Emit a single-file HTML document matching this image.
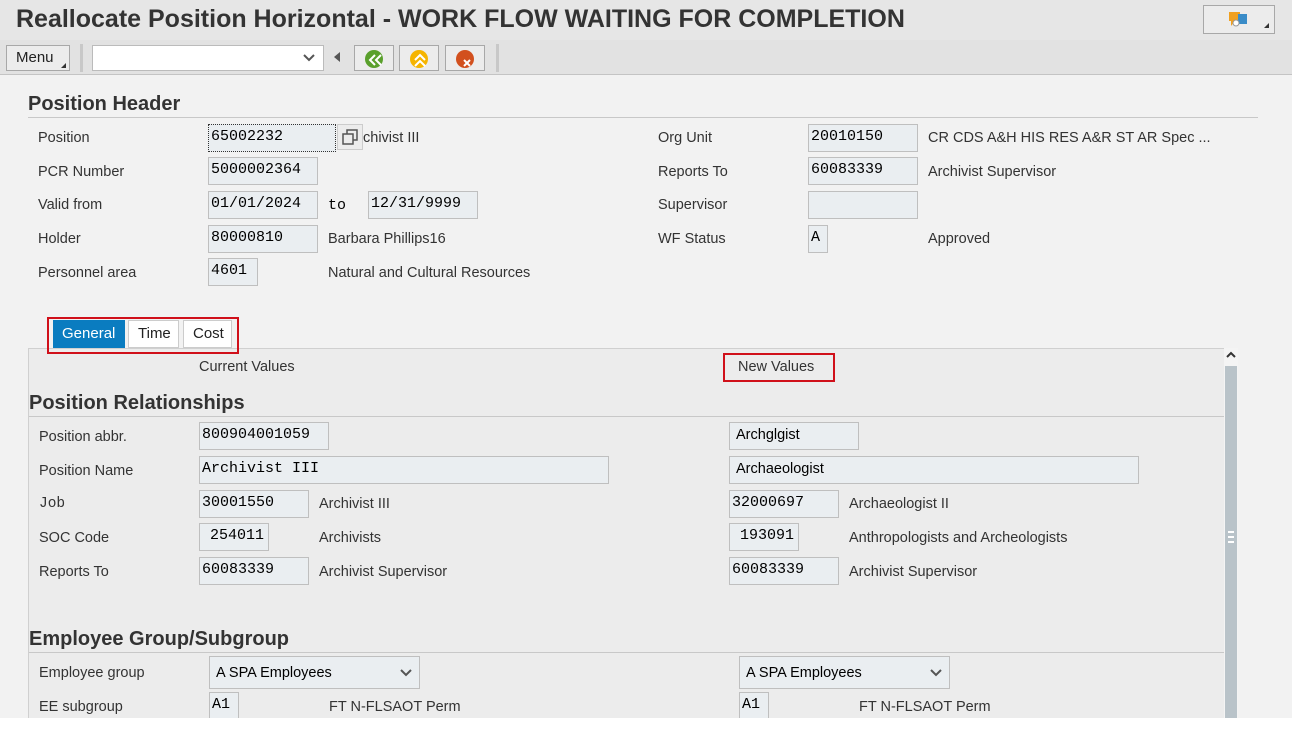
<!DOCTYPE html>
<html><head><meta charset="utf-8"><style>
*{box-sizing:border-box;margin:0;padding:0}
body{width:1292px;height:732px;overflow:hidden;background:#f2f2f2;font-family:"Liberation Sans",sans-serif;font-size:14.5px;color:#333;position:relative}
.a{position:absolute;white-space:nowrap}
.in{position:absolute;height:28px;background:#eaeef1;border:1px solid #bfbfbf;font-family:"Liberation Mono",monospace;font-size:15px;color:#000;padding:3px 0 0 2px;white-space:nowrap}
.ins{font-family:"Liberation Sans",sans-serif;font-size:14.5px;padding-left:6px;padding-top:4px}
.lb{position:absolute;white-space:nowrap;color:#333}
.h{position:absolute;font-weight:bold;font-size:20px;color:#333}
.btn{position:absolute;top:45px;height:26px;border:1px solid #a8a8a8;background:#ececec}
</style></head><body>
<div class="a" style="left:0;top:0;width:1292px;height:40px;background:#e6e6e6"></div>
<div class="a" style="left:0;top:40px;width:1292px;height:35px;background:#e2e2e2;border-bottom:1px solid #c4c4c4"></div>
<div class="a" style="left:16px;top:5px;font-size:25px;font-weight:bold;color:#333">Reallocate Position Horizontal - WORK FLOW WAITING FOR COMPLETION</div>
<div class="a" style="left:1203px;top:5px;width:72px;height:29px;border:1px solid #a8a8a8;background:#ececec">
<svg width="72" height="29"><rect x="25" y="6" width="11" height="9" fill="#f0a020"/><path d="M27 15 l0 5 l4 -5z" fill="#f0a020"/><rect x="34" y="8" width="9" height="10" fill="#3a8cc8"/><circle cx="32" cy="17" r="3" fill="#fff" stroke="#999"/><path d="M60 22 l5 0 l0 -5z" fill="#333"/></svg></div>
<div class="btn" style="left:6px;width:64px;font-size:15px;padding:3px 0 0 9px;color:#222">Menu<span style="position:absolute;right:3px;bottom:2px;border-left:5px solid transparent;border-bottom:5px solid #333"></span></div>
<div class="a" style="left:80px;top:44px;width:3px;height:28px;background:#c8c8c8"></div>
<div class="a" style="left:92px;top:45px;width:232px;height:26px;background:#fff;border:1px solid #bbb"><svg class="a" style="left:210px;top:8px" width="12" height="8"><path d="M1 1 l5 5 l5 -5" stroke="#555" stroke-width="2" fill="none"/></svg></div>
<div class="a" style="left:334px;top:52px;border-right:6px solid #555;border-top:5px solid transparent;border-bottom:5px solid transparent"></div>
<div class="btn" style="left:354px;width:40px"><svg width="40" height="26"><circle cx="19" cy="13" r="9" fill="#5aa02c"/><path d="M20 9 l-5 5 l5 5 M26 9 l-5 5 l5 5" stroke="#fff" stroke-width="2" fill="none"/></svg></div>
<div class="btn" style="left:399px;width:40px"><svg width="40" height="26"><circle cx="19" cy="13" r="9" fill="#f5b400"/><path d="M15 14 l5 -5 l5 5 M15 20 l5 -5 l5 5" stroke="#fff" stroke-width="2" fill="none"/></svg></div>
<div class="btn" style="left:445px;width:40px"><svg width="40" height="26"><circle cx="19" cy="13" r="9" fill="#d2501e"/><path d="M18 14 l6 6 M24 14 l-6 6" stroke="#fff" stroke-width="2"/></svg></div>
<div class="a" style="left:496px;top:44px;width:3px;height:28px;background:#c8c8c8"></div>

<div class="h" style="left:28px;top:93px">Position Header</div>
<div class="a" style="left:28px;top:117px;width:1230px;height:1px;background:#c8c8c8"></div>
<div class="lb" style="left:38px;top:130px">Position</div>
<div class="in" style="left:208px;top:124px;width:128px;border:1px dotted #333">65002232</div>
<div class="a" style="left:337px;top:124px;width:26px;height:26px;border:1px solid #ccc;background:#ececec"><svg width="24" height="24"><rect x="5" y="9" width="10" height="10" fill="none" stroke="#555" stroke-width="1.5"/><path d="M9 9 V5 h10 v10 h-4" fill="none" stroke="#555" stroke-width="1.5"/></svg></div>
<div class="lb" style="left:363px;top:130px">chivist III</div>
<div class="lb" style="left:38px;top:164px">PCR Number</div><div class="in" style="left:208px;top:157px;width:110px">5000002364</div>
<div class="lb" style="left:38px;top:197px">Valid from</div><div class="in" style="left:208px;top:191px;width:110px">01/01/2024</div>
<div class="lb" style="left:328px;top:197px;font-family:'Liberation Mono',monospace;font-size:15px;color:#000">to</div>
<div class="in" style="left:368px;top:191px;width:110px">12/31/9999</div>
<div class="lb" style="left:38px;top:231px">Holder</div><div class="in" style="left:208px;top:225px;width:110px">80000810</div><div class="lb" style="left:328px;top:231px">Barbara Phillips16</div>
<div class="lb" style="left:38px;top:265px">Personnel area</div><div class="in" style="left:208px;top:258px;width:50px">4601</div><div class="lb" style="left:328px;top:265px">Natural and Cultural Resources</div>
<div class="lb" style="left:658px;top:130px">Org Unit</div><div class="in" style="left:808px;top:124px;width:110px">20010150</div><div class="lb" style="left:928px;top:130px">CR CDS A&amp;H HIS RES A&amp;R ST AR Spec ...</div>
<div class="lb" style="left:658px;top:164px">Reports To</div><div class="in" style="left:808px;top:157px;width:110px">60083339</div><div class="lb" style="left:928px;top:164px">Archivist Supervisor</div>
<div class="lb" style="left:658px;top:197px">Supervisor</div><div class="in" style="left:808px;top:191px;width:110px"></div>
<div class="lb" style="left:658px;top:231px">WF Status</div><div class="in" style="left:808px;top:225px;width:20px">A</div><div class="lb" style="left:928px;top:231px">Approved</div>

<div class="a" style="left:28px;top:348px;width:1196px;height:372px;background:#ececec;border-top:1px solid #d0d0d0;border-left:1px solid #d0d0d0"></div>
<div class="a" style="left:1224px;top:348px;width:14px;height:372px;background:#f4f4f4"></div>
<div class="a" style="left:1225px;top:366px;width:12px;height:354px;background:#b9c3c9"></div>
<svg class="a" style="left:1225px;top:350px" width="12" height="10"><path d="M2 7 l4 -4 l4 4" stroke="#333" stroke-width="2" fill="none"/></svg>
<div class="a" style="left:1228px;top:531px;width:6px;height:12px;border-top:2px solid #fff;border-bottom:2px solid #fff"><div style="margin-top:3px;height:2px;background:#fff"></div></div>

<div class="a" style="left:47px;top:317px;width:192px;height:37px;border:2px solid #d0101a"></div>
<div class="a" style="left:53px;top:320px;width:72px;height:28px;background:#0a7cc0;color:#fff;font-size:15px;padding:5px 0 0 9px">General</div>
<div class="a" style="left:128px;top:320px;width:51px;height:28px;background:#fff;border:1px solid #ccc;font-size:15px;padding:4px 0 0 9px;color:#222">Time</div>
<div class="a" style="left:183px;top:320px;width:49px;height:28px;background:#fff;border:1px solid #ccc;font-size:15px;padding:4px 0 0 9px;color:#222">Cost</div>

<div class="lb" style="left:199px;top:359px">Current Values</div>
<div class="a" style="left:723px;top:353px;width:112px;height:29px;border:2px solid #d0101a"></div>
<div class="lb" style="left:738px;top:359px">New Values</div>

<div class="h" style="left:29px;top:392px">Position Relationships</div>
<div class="a" style="left:29px;top:416px;width:1195px;height:1px;background:#c8c8c8"></div>
<div class="lb" style="left:39px;top:429px">Position abbr.</div><div class="in" style="left:199px;top:422px;width:130px">800904001059</div><div class="in ins" style="left:729px;top:422px;width:130px">Archglgist</div>
<div class="lb" style="left:39px;top:463px">Position Name</div><div class="in" style="left:199px;top:456px;width:410px">Archivist III</div><div class="in ins" style="left:729px;top:456px;width:410px">Archaeologist</div>
<div class="lb" style="left:39px;top:496px;font-family:'Liberation Mono',monospace">Job</div><div class="in" style="left:199px;top:490px;width:110px">30001550</div><div class="lb" style="left:319px;top:496px">Archivist III</div><div class="in" style="left:729px;top:490px;width:110px">32000697</div><div class="lb" style="left:849px;top:496px">Archaeologist II</div>
<div class="lb" style="left:39px;top:530px">SOC Code</div><div class="in" style="left:199px;top:523px;width:70px;padding-left:10px">254011</div><div class="lb" style="left:319px;top:530px">Archivists</div><div class="in" style="left:729px;top:523px;width:70px;padding-left:10px">193091</div><div class="lb" style="left:849px;top:530px">Anthropologists and Archeologists</div>
<div class="lb" style="left:39px;top:564px">Reports To</div><div class="in" style="left:199px;top:557px;width:110px">60083339</div><div class="lb" style="left:319px;top:564px">Archivist Supervisor</div><div class="in" style="left:729px;top:557px;width:110px">60083339</div><div class="lb" style="left:849px;top:564px">Archivist Supervisor</div>

<div class="h" style="left:29px;top:628px">Employee Group/Subgroup</div>
<div class="a" style="left:29px;top:652px;width:1195px;height:1px;background:#c8c8c8"></div>
<div class="lb" style="left:39px;top:665px">Employee group</div>
<div class="in ins" style="left:209px;top:656px;width:211px;height:33px;padding-top:8px;color:#000">A SPA Employees<svg class="a" style="left:190px;top:12px" width="12" height="8"><path d="M1 1 l5 5 l5 -5" stroke="#555" stroke-width="2" fill="none"/></svg></div>
<div class="in ins" style="left:739px;top:656px;width:211px;height:33px;padding-top:8px;color:#000">A SPA Employees<svg class="a" style="left:190px;top:12px" width="12" height="8"><path d="M1 1 l5 5 l5 -5" stroke="#555" stroke-width="2" fill="none"/></svg></div>
<div class="lb" style="left:39px;top:699px">EE subgroup</div><div class="in" style="left:209px;top:692px;width:30px">A1</div><div class="lb" style="left:329px;top:699px">FT N-FLSAOT Perm</div>
<div class="in" style="left:739px;top:692px;width:30px">A1</div><div class="lb" style="left:859px;top:699px">FT N-FLSAOT Perm</div>
<div class="a" style="left:0;top:718px;width:1292px;height:14px;background:#fff"></div>
</body></html>
